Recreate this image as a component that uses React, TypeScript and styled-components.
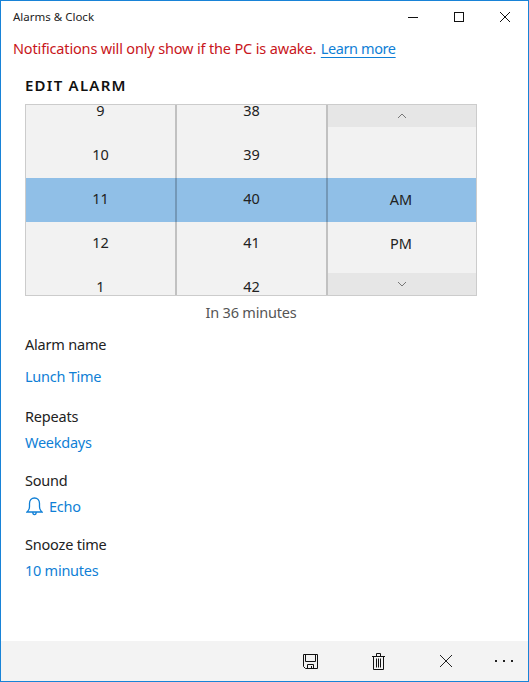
import React from "react";
import styled, { createGlobalStyle } from "styled-components";

const Global = createGlobalStyle`
  html, body { margin: 0; padding: 0; background: #fff; }
  * { box-sizing: border-box; }
`;

const Win = styled.div`
  width: 529px; height: 682px; border: 1px solid #1883d7; background: #fff;
  display: flex; flex-direction: column; overflow: hidden;
  font-family: "Noto Sans", "Open Sans", sans-serif; color: #111;
`;
const TitleBar = styled.div`
  height: 31px; flex: none; display: flex; align-items: center; justify-content: space-between;
  padding: 0 0 0 12px;
`;
const Title = styled.span`font-size: 11.5px; color: #222; letter-spacing: 0;`;
const Controls = styled.div`display: flex;`;
const Ctl = styled.div`
  width: 46px; height: 31px; display: flex; align-items: center; justify-content: center;
  svg { display: block; }
`;
const Banner = styled.div`
  flex: none; margin: 3px 0 0 12px; font-size: 14.5px; line-height: 26px; color: #c81620; letter-spacing: -0.16px;
`;
const Learn = styled.span`
  color: #0f7fd6; text-decoration: underline; text-underline-offset: 3px; letter-spacing: -0.4px; margin-left: 1px;
`;
const Content = styled.div`flex: 1; padding: 14px 0 0 24px; display: flex; flex-direction: column;`;
const Heading = styled.div`
  font-size: 15px; font-weight: 600; letter-spacing: 1.25px; line-height: 20px; color: #111;
`;
const Picker = styled.div`
  width: 452px; height: 192px; margin-top: 9px; border: 1px solid #ccc; background: #f2f2f2;
  display: grid; grid-template-columns: 151px 151px 148px; overflow: hidden;
`;
const Column = styled.div`
  height: 190px; overflow: hidden; display: flex; flex-direction: column; position: relative;
  &:not(:last-child)::after {
    content: ""; position: absolute; top: 0; right: 0; bottom: 0; width: 2px; background: rgba(0, 0, 0, 0.2);
  }
`;
const NumList = styled.div`margin-top: -15px; display: flex; flex-direction: column;`;
const Cell = styled.div<{ $on?: boolean; $lift: number }>`
  height: 44px; flex: none; display: flex; align-items: center; justify-content: center;
  font-size: 14.5px; color: #222; background: ${(p) => (p.$on ? "#90bfe7" : "transparent")};
  padding: 0 2px ${(p) => p.$lift}px 0;
`;
const Spacer = styled.div<{ $h: number }>`height: ${(p) => p.$h}px; flex: none;`;
const Step = styled.div`
  height: 22px; flex: none; background: #e6e6e6; display: flex; align-items: center; justify-content: center;
`;
const AmpmFill = styled.div`flex: 1;`;
const Hint = styled.div`
  width: 452px; text-align: center; margin-top: 5px; font-size: 14.5px; line-height: 22px; color: #555; letter-spacing: -0.2px;
`;
const Field = styled.div<{ $top: number }>`margin-top: ${(p) => p.$top}px;`;
const Label = styled.div`font-size: 14.5px; line-height: 20px; color: #222; letter-spacing: -0.2px;`;
const Value = styled.div<{ $gap: number }>`
  margin-top: ${(p) => p.$gap}px; display: flex; align-items: center; gap: 6px;
  font-size: 14.5px; line-height: 20px; color: #0f7fd6; letter-spacing: -0.25px;
  svg { display: block; }
`;
const Bell = styled.svg`margin-left: 1px; flex: none;`;
const Bar = styled.div`
  height: 40px; flex: none; background: #f3f3f3; display: flex; align-items: center; position: relative;
`;
const BarBtn = styled.div<{ $w: number }>`
  width: ${(p) => p.$w}px; height: 40px; display: flex; align-items: center; justify-content: center; flex: none;
  svg { display: block; }
`;
const BarSpace = styled.div`flex: 1;`;

const Up = () => (
  <svg width="10" height="6" viewBox="0 0 10 6" fill="none" stroke="#777" strokeWidth="1"><path d="M1 5 L5 1 L9 5" /></svg>
);
const Down = () => (
  <svg width="10" height="6" viewBox="0 0 10 6" fill="none" stroke="#777" strokeWidth="1"><path d="M1 1 L5 5 L9 1" /></svg>
);

export default function App() {
  return (
    <Win>
      <Global />
      <TitleBar>
        <Title>Alarms &amp; Clock</Title>
        <Controls>
          <Ctl>
            <svg width="10" height="10" viewBox="0 0 10 10" stroke="#111" fill="none"><path d="M0 5.5H10" /></svg>
          </Ctl>
          <Ctl>
            <svg width="10" height="10" viewBox="0 0 10 10" stroke="#111" fill="none"><rect x="0.5" y="0.5" width="9" height="9" /></svg>
          </Ctl>
          <Ctl>
            <svg width="10" height="10" viewBox="0 0 10 10" stroke="#111" fill="none"><path d="M0 0L10 10M10 0L0 10" /></svg>
          </Ctl>
        </Controls>
      </TitleBar>
      <Banner>
        Notifications will only show if the PC is awake. <Learn>Learn more</Learn>
      </Banner>
      <Content>
        <Heading>EDIT ALARM</Heading>
        <Picker>
          <Column>
            <NumList>
              <Cell $lift={4}>9</Cell>
              <Cell $lift={4}>10</Cell>
              <Cell $lift={4} $on>11</Cell>
              <Cell $lift={4}>12</Cell>
              <Cell $lift={4}>1</Cell>
            </NumList>
          </Column>
          <Column>
            <NumList>
              <Cell $lift={4}>38</Cell>
              <Cell $lift={4}>39</Cell>
              <Cell $lift={4} $on>40</Cell>
              <Cell $lift={4}>41</Cell>
              <Cell $lift={4}>42</Cell>
            </NumList>
          </Column>
          <Column>
            <Step><Up /></Step>
            <Spacer $h={51} />
            <Cell $lift={2} $on>AM</Cell>
            <Cell $lift={2}>PM</Cell>
            <AmpmFill />
            <Step><Down /></Step>
          </Column>
        </Picker>
        <Hint>In 36 minutes</Hint>
        <Field $top={11}>
          <Label>Alarm name</Label>
          <Value $gap={12}>Lunch Time</Value>
        </Field>
        <Field $top={20}>
          <Label>Repeats</Label>
          <Value $gap={6}>Weekdays</Value>
        </Field>
        <Field $top={18}>
          <Label>Sound</Label>
          <Value $gap={6}>
            <Bell width="17" height="19" viewBox="0 0 17 19" fill="none" stroke="#0f7fd6" strokeWidth="1.3">
              <path d="M1 15 C2.8 13.5 3.5 12 3.5 9.5 V6.5 C3.5 3.3 5.6 1 8.5 1 C11.4 1 13.5 3.3 13.5 6.5 V9.5 C13.5 12 14.2 13.5 16 15 Z" />
              <path d="M6.8 15 C6.8 16.8 7.7 17.6 8.5 17.6 C9.3 17.6 10.2 16.8 10.2 15" />
            </Bell>
            Echo
          </Value>
        </Field>
        <Field $top={18}>
          <Label>Snooze time</Label>
          <Value $gap={6}>10 minutes</Value>
        </Field>
      </Content>
      <Bar>
        <BarSpace />
        <BarBtn $w={68}>
          <svg width="15" height="15" viewBox="0 0 15 15" fill="none" stroke="#111" strokeWidth="1">
            <path d="M0.5 0.5H14.5V14.5H2.5L0.5 12.5Z" />
            <path d="M2.5 0.5V7.5H12.5V0.5M4.5 14.5V10.5H10.5V14.5M8.5 12V14" />
          </svg>
        </BarBtn>
        <BarBtn $w={68}>
          <svg width="13" height="17" viewBox="0 0 13 17" fill="none" stroke="#111" strokeWidth="1">
            <path d="M0 3.5H13M4.5 3.5V0.5H8.5V3.5M1.5 3.5V16.5H11.5V3.5M4.5 5.5V14.5M6.5 5.5V14.5M8.5 5.5V14.5" />
          </svg>
        </BarBtn>
        <BarBtn $w={68}>
          <svg width="14" height="14" viewBox="0 0 14 14" fill="none" stroke="#222" strokeWidth="1">
            <path d="M1 1L13 13M13 1L1 13" />
          </svg>
        </BarBtn>
        <BarBtn $w={48}>
          <svg width="20" height="4" viewBox="0 0 20 4" fill="#222">
            <rect x="1" y="1" width="2" height="2" /><rect x="9" y="1" width="2" height="2" /><rect x="17" y="1" width="2" height="2" />
          </svg>
        </BarBtn>
      </Bar>
    </Win>
  );
}
